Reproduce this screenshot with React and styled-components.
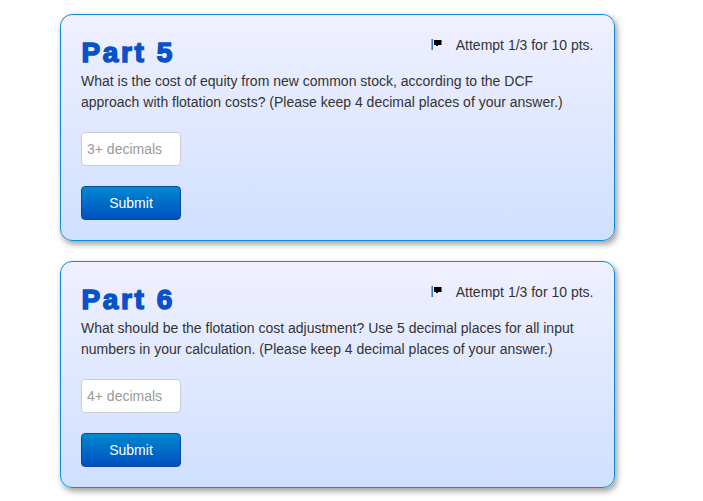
import styled, { createGlobalStyle } from "styled-components";

const Global = createGlobalStyle`
  html, body {
    margin: 0;
    background: #fff;
  }
  body {
    min-height: 501px;
    font-family: "Liberation Sans", Arial, sans-serif;
  }
`;

const Page = styled.div`
  width: 555px;
  margin-left: 60px;
  padding: 14px 0 13px;
  display: flex;
  flex-direction: column;
  gap: 20px;
`;

const Card = styled.section`
  box-sizing: border-box;
  height: 227px;
  padding: 20px;
  border: 1px solid #0a8fd8;
  border-radius: 12px;
  background: linear-gradient(to bottom, #f0f0ff, #cfe0ff);
  box-shadow: 2px 3px 6px rgba(0, 0, 0, 0.4);
`;

const Header = styled.div`
  display: flex;
  justify-content: space-between;
  align-items: flex-start;
  height: 36px;
`;

const Title = styled.h2`
  margin: 0;
  padding-left: 0.5px;
  font-family: "Liberation Sans", Arial, sans-serif;
  font-weight: 700;
  font-size: 28px;
  line-height: 36px;
  color: #0752c8;
  letter-spacing: 2.6px;
  -webkit-text-stroke: 1.5px #0752c8;
`;

const Attempt = styled.div`
  display: flex;
  align-items: center;
  gap: 12.5px;
  margin-right: 0.5px;
  font-size: 14px;
  line-height: 20px;
  color: #333;
`;

const Question = styled.p`
  margin: 0;
  font-size: 14px;
  line-height: 21px;
  color: #333;
`;

const Input = styled.input`
  display: block;
  box-sizing: border-box;
  width: 100px;
  height: 34px;
  margin-top: 19px;
  padding: 0 5px;
  border: 1px solid #ccc;
  border-radius: 4px;
  background: #fff;
  font-family: inherit;
  font-size: 14px;
  &::placeholder {
    color: #999;
    opacity: 1;
  }
`;

const Submit = styled.button`
  display: block;
  width: 100px;
  height: 34px;
  margin-top: 20px;
  padding: 0;
  border: 1px solid #0a4a9c;
  border-radius: 4px;
  background: linear-gradient(to bottom, #0088d0, #0050c0);
  color: #fff;
  font-family: inherit;
  font-size: 14px;
`;

const Flag = () => (
  <svg width="12" height="12" viewBox="0 0 12 12">
    <rect x="0" y="0" width="1" height="11" fill="#e8954a" />
    <rect x="1" y="0" width="1" height="11" fill="#2f7fd0" />
    <path d="M3 1h7v5H7v1H5V6H3z" fill="#000" />
    <rect x="10" y="1" width="1" height="5" fill="#2f7fe0" />
  </svg>
);

const parts = [
  {
    title: "Part 5",
    text: "What is the cost of equity from new common stock, according to the DCF approach with flotation costs? (Please keep 4 decimal places of your answer.)",
    hint: "3+ decimals",
  },
  {
    title: "Part 6",
    text: "What should be the flotation cost adjustment? Use 5 decimal places for all input numbers in your calculation. (Please keep 4 decimal places of your answer.)",
    hint: "4+ decimals",
  },
];

const App = () => (
  <>
    <Global />
    <Page>
      {parts.map((part) => (
        <Card key={part.title}>
          <Header>
            <Title>{part.title}</Title>
            <Attempt>
              <Flag />
              Attempt 1/3 for 10 pts.
            </Attempt>
          </Header>
          <Question>{part.text}</Question>
          <Input placeholder={part.hint} />
          <Submit>Submit</Submit>
        </Card>
      ))}
    </Page>
  </>
);

export default App;
